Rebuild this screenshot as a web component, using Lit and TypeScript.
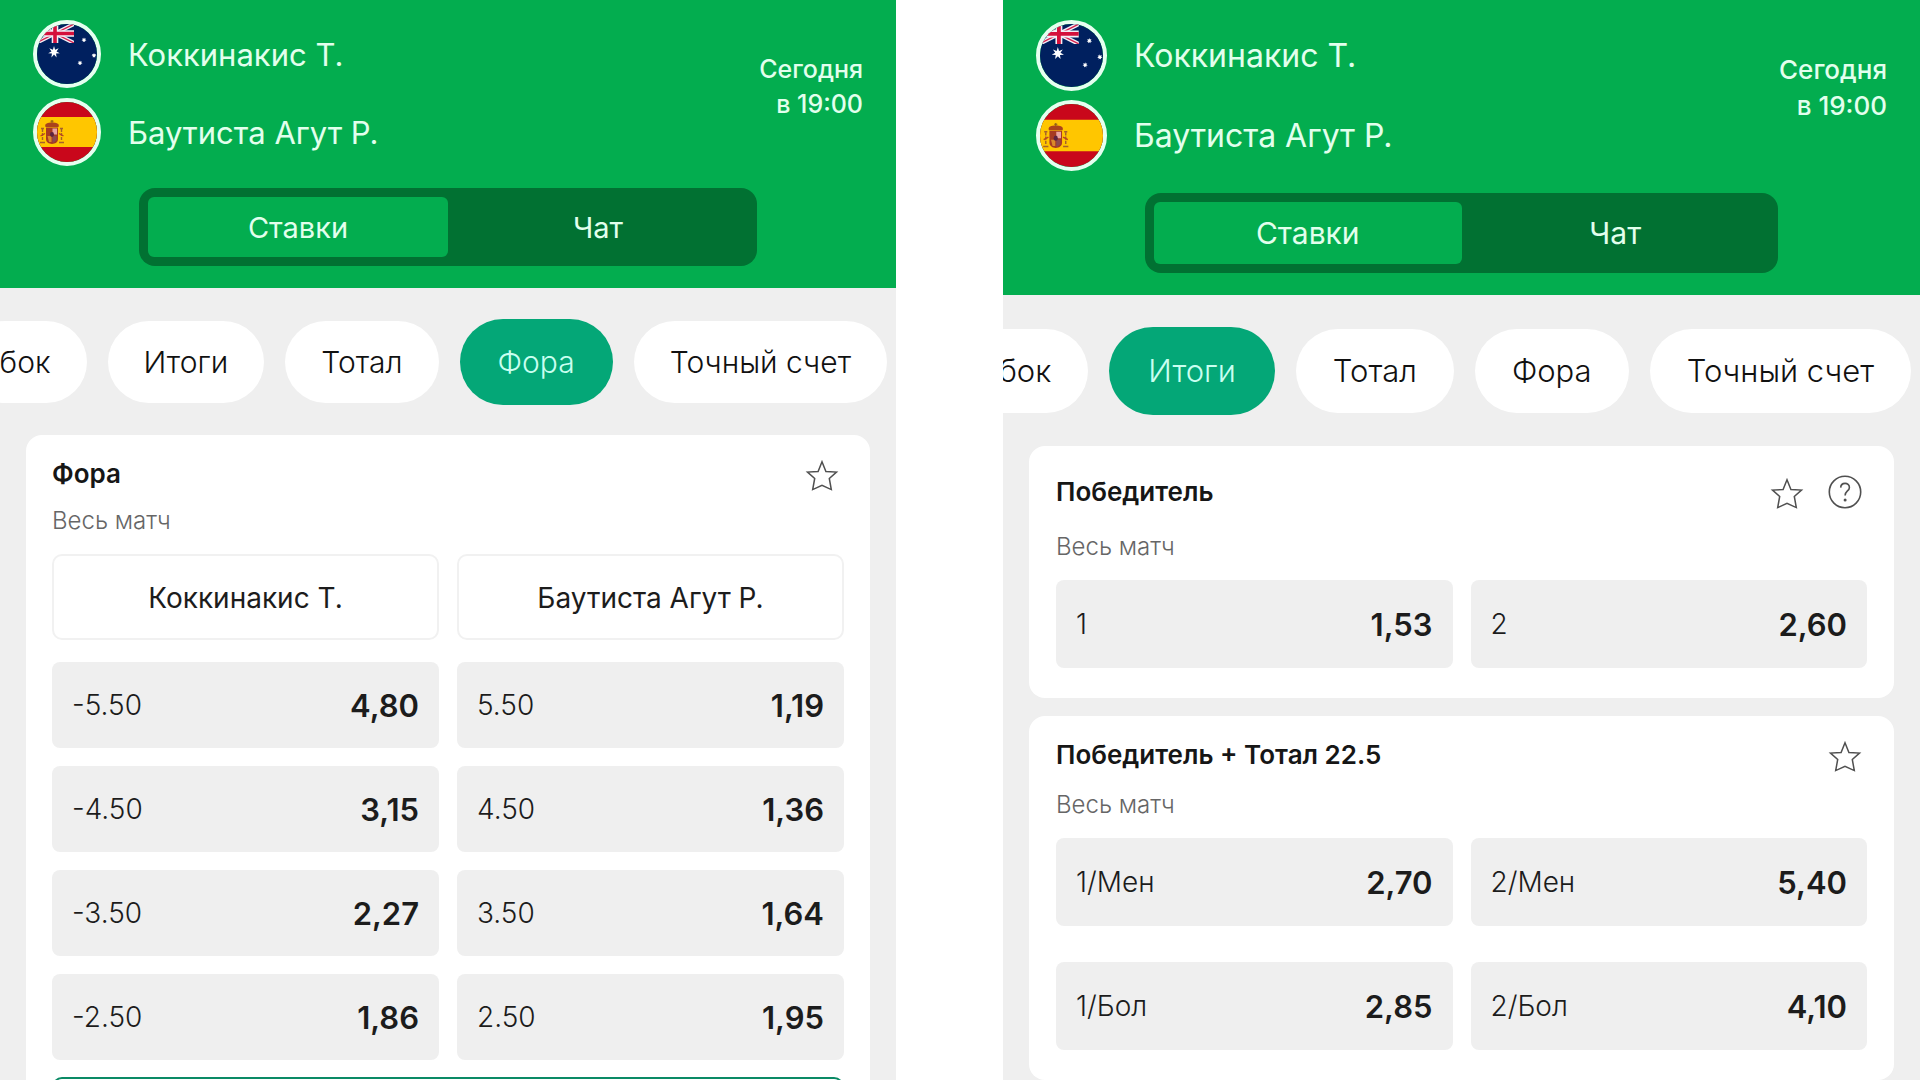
import { LitElement, html, svg, css, nothing } from "lit";
import { customElement, property } from "lit/decorators.js";
import { classMap } from "lit/directives/class-map.js";

interface Odd {
  label: string;
  price: string;
}

interface Market {
  title: string;
  scope: string;
  help?: boolean;
  roomy?: boolean;
  columns?: string[];
  odds: Odd[];
  more?: boolean;
}

const starPoints = (cx: number, cy: number, outer: number, inner: number, tips: number) =>
  Array.from({ length: tips * 2 }, (_, i) => {
    const r = i % 2 ? inner : outer;
    const a = (Math.PI * i) / tips - Math.PI / 2;
    return `${(cx + r * Math.cos(a)).toFixed(2)},${(cy + r * Math.sin(a)).toFixed(2)}`;
  }).join(" ");

const australia = html`
  <svg class="flag" viewBox="0 0 60 60" role="img" aria-label="Австралия">
    <rect width="60" height="60" fill="#00205f" />
    <svg x="-1" y="0" width="38" height="19" viewBox="0 0 38 19">
      <path d="M0 0L38 19M38 0L0 19" stroke="#f3eef6" stroke-width="4" />
      <path d="M0 0L38 19M38 0L0 19" stroke="#d5214c" stroke-width="1.3" />
      <path d="M19 0V19M0 9.5H38" stroke="#f3eef6" stroke-width="6.6" />
      <path d="M19 0V19M0 9.5H38" stroke="#d5103c" stroke-width="3.6" />
    </svg>
    ${svg`
      <polygon points=${starPoints(17, 28, 6, 2.6, 7)} fill="#fff" />
      <polygon points=${starPoints(47, 16, 2.6, 1.3, 7)} fill="#fff" />
      <polygon points=${starPoints(57, 31.5, 2.6, 1.3, 7)} fill="#fff" />
      <polygon points=${starPoints(43, 39, 2.6, 1.3, 7)} fill="#fff" />
    `}
  </svg>
`;

const spain = html`
  <svg class="flag" viewBox="0 0 60 60" role="img" aria-label="Испания">
    <rect width="60" height="60" fill="#c9071b" />
    <rect y="15" width="60" height="30" fill="#ffc600" />
    <g fill="none" stroke="#a5622b" stroke-width="1.4">
      <path d="M5.5 27V39M24.5 27V39" stroke-dasharray="3 1" />
      <path d="M3 40.5H8M22 40.5H27M4 26.5H7M23 26.5H26" />
      <path d="M3.5 34L8 31.5M26.5 34L22 31.5" stroke="#b8441f" />
    </g>
    <path d="M8.5 25C7 21.5 11 20.5 15 20.5C19 20.5 23 21.5 21.5 25Z" fill="#a9431c" />
    <path d="M15 18V21M13.5 19.2H16.5" stroke="#8a5a1c" stroke-width="1" />
    <path d="M9 25.5H21V37C21 43.5 9 43.5 9 37Z" fill="#a63a22" />
    <path d="M15.5 26.5H20V32.5H15.5Z" fill="#e8a3a0" />
    <path d="M10.5 34H14.5V40H12Z" fill="#d98a2a" />
    <path d="M15.5 34H19.5V38L17 40.5H15.5Z" fill="#8b4a4f" />
    <ellipse cx="15" cy="32.5" rx="2" ry="2.4" fill="#5b2340" />
  </svg>
`;

const star = html`
  <svg class="icon" viewBox="0 0 34 34" aria-hidden="true">
    <path
      d="M17 4.8L20.9 14.6L31.5 15.1L24.3 21.5L26.3 32.6L17 28.4L7.7 32.6L9.7 21.5L2.5 15.1L13.1 14.6Z"
      fill="none" stroke="#505050" stroke-width="1.5" stroke-linejoin="miter" />
  </svg>
`;

const help = html`
  <svg class="icon" viewBox="0 0 34 34" aria-hidden="true">
    <circle cx="17" cy="17" r="15.7" fill="none" stroke="#505050" stroke-width="1.6" />
    <path d="M12.7 12.6C12.9 7 21.4 7 21.4 12.4C21.4 16 17.1 16 17.1 20.5"
      fill="none" stroke="#505050" stroke-width="1.6" />
    <circle cx="17.1" cy="25" r="1.5" fill="#505050" />
  </svg>
`;

@customElement("market-card")
export class MarketCard extends LitElement {
  @property({ attribute: false }) market!: Market;

  static styles = css`
    :host {
      display: block;
    }
    .card {
      padding: 19px var(--card-pad) 30px;
      border-radius: 16px;
      background: #fff;
    }
    .card.roomy {
      padding-top: 26px;
    }
    .head {
      display: flex;
      align-items: center;
      justify-content: space-between;
      height: 39px;
      padding-right: 5px;
    }
    .title {
      margin: 0;
      color: #161616;
      font-size: 26px;
      font-weight: 600;
      line-height: 39px;
    }
    .actions {
      display: flex;
      gap: 24px;
    }
    .action {
      display: block;
      padding: 0;
      border: 0;
      background: none;
      cursor: pointer;
    }
    .icon {
      display: block;
      width: 34px;
      height: 34px;
    }
    .scope {
      margin: var(--scope-gap) 0 17px;
      color: #666;
      font-size: 24px;
      font-weight: 300;
      line-height: var(--scope-line);
    }
    .roomy .scope {
      margin-top: 19px;
    }
    .grid {
      display: grid;
      grid-template-columns: repeat(2, minmax(0, 1fr));
      column-gap: 18px;
      row-gap: var(--row-gap);
    }
    .columns {
      margin-bottom: 22px;
    }
    .column {
      box-sizing: border-box;
      height: var(--cell-height);
      border: 2px solid #f1f1f1;
      border-radius: 10px;
      color: #1c1c1c;
      font-size: 28px;
      line-height: 84px;
      text-align: center;
    }
    .odd {
      display: flex;
      align-items: center;
      justify-content: space-between;
      height: var(--cell-height);
      padding: 0 20px;
      border: 0;
      border-radius: 8px;
      background: #efefef;
      color: #1c1c1c;
      font-family: inherit;
      cursor: pointer;
    }
    .label {
      font-size: 28px;
      font-weight: 300;
    }
    .price {
      font-size: 31px;
      font-weight: 600;
    }
    .more {
      display: block;
      width: 100%;
      height: var(--cell-height);
      margin-top: 17px;
      border: 2px solid #0a8a65;
      border-radius: 10px;
      background: #fff;
      cursor: pointer;
    }
  `;

  render() {
    const m = this.market;
    return html`
      <section class=${classMap({ card: true, roomy: !!m.roomy })}>
        <div class="head">
          <h2 class="title">${m.title}</h2>
          <div class="actions">
            <button class="action" aria-label="В избранное">${star}</button>
            ${m.help ? html`<button class="action" aria-label="Справка">${help}</button>` : nothing}
          </div>
        </div>
        <p class="scope">${m.scope}</p>
        ${m.columns
          ? html`<div class="grid columns">
              ${m.columns.map((c) => html`<div class="column">${c}</div>`)}
            </div>`
          : nothing}
        <div class="grid">
          ${m.odds.map(
            (o) => html`<button class="odd">
              <span class="label">${o.label}</span><span class="price">${o.price}</span>
            </button>`
          )}
        </div>
        ${m.more ? html`<button class="more" aria-label="Ещё"></button>` : nothing}
      </section>
    `;
  }
}

@customElement("match-panel")
export class MatchPanel extends LitElement {
  @property() active = "";
  @property({ type: Boolean, reflect: true }) large = false;
  @property({ attribute: false }) markets: Market[] = [];

  static styles = css`
    :host {
      --flag: 68px;
      --flag-gap: 10px;
      --name-size: 31px;
      --time-size: 25px;
      --time-line: 35px;
      --inset: 139px;
      --toggle-height: 60px;
      --tab-size: 29px;
      --chip-size: 30px;
      --chip-height: 82px;
      --chip-pad: 36px;
      --chip-row: 147px;
      --card-pad: 26px;
      --scope-line: 32px;
      --scope-gap: 12px;
      --cell-height: 86px;
      --row-gap: 18px;
      display: block;
      overflow: hidden;
      background: #efefef;
    }
    :host([large]) {
      --flag: 71px;
      --flag-gap: 9px;
      --name-size: 32px;
      --time-size: 26px;
      --time-line: 36px;
      --inset: 142px;
      --toggle-height: 62px;
      --tab-size: 30px;
      --chip-size: 31px;
      --chip-height: 84px;
      --chip-pad: 37px;
      --chip-row: 151px;
      --card-pad: 27px;
      --scope-line: 33px;
      --scope-gap: 14px;
      --cell-height: 88px;
      --row-gap: 36px;
    }
    .header {
      padding: 20px 33px 22px;
      background: #03ad4f;
      color: #e2ffed;
    }
    .match {
      display: flex;
      justify-content: space-between;
    }
    .teams {
      display: grid;
      gap: var(--flag-gap);
      margin: 0;
      padding: 0;
      list-style: none;
    }
    .team {
      display: flex;
      align-items: center;
      gap: 27px;
      font-size: var(--name-size);
    }
    .flag {
      display: block;
      box-sizing: border-box;
      width: var(--flag);
      height: var(--flag);
      border: 4px solid #e6fff0;
      border-radius: 50%;
    }
    .time {
      margin: 32px 0 0;
      font-size: var(--time-size);
      font-weight: 500;
      line-height: var(--time-line);
      text-align: right;
    }
    .toggle {
      display: grid;
      grid-template-columns: 1fr 1fr;
      margin: 22px calc(var(--inset) - 33px) 0;
      padding: 9px;
      border-radius: 16px;
      background: #017132;
    }
    .tab {
      height: var(--toggle-height);
      padding: 0;
      border: 0;
      border-radius: 6px;
      background: none;
      color: inherit;
      font-family: inherit;
      font-size: var(--tab-size);
      cursor: pointer;
    }
    .tab.on {
      background: #03ad4f;
    }
    .chips {
      display: flex;
      align-items: center;
      justify-content: flex-end;
      gap: 21px;
      height: var(--chip-row);
      padding-right: 9px;
    }
    .chip {
      flex: none;
      height: var(--chip-height);
      padding: 0 var(--chip-pad);
      border: 0;
      border-radius: 44px;
      background: #fff;
      color: #111;
      font-family: inherit;
      font-size: var(--chip-size);
      font-weight: 300;
      cursor: pointer;
    }
    .chip.on {
      height: calc(var(--chip-height) + 4px);
      padding: 0 calc(var(--chip-pad) + 2px);
      background: #04a777;
      color: #c9fff0;
    }
    .markets {
      display: grid;
      gap: 18px;
      padding: 0 26px;
    }
  `;

  render() {
    const chips = ["бок", "Итоги", "Тотал", "Фора", "Точный счет"];
    return html`
      <header class="header">
        <div class="match">
          <ul class="teams">
            <li class="team">${australia}<span>Коккинакис Т.</span></li>
            <li class="team">${spain}<span>Баутиста Агут Р.</span></li>
          </ul>
          <p class="time">Сегодня<br />в 19:00</p>
        </div>
        <div class="toggle">
          <button class="tab on">Ставки</button>
          <button class="tab">Чат</button>
        </div>
      </header>
      <nav class="chips">
        ${chips.map(
          (c) => html`<button class=${classMap({ chip: true, on: c === this.active })}>${c}</button>`
        )}
      </nav>
      <div class="markets">
        ${this.markets.map((m) => html`<market-card .market=${m}></market-card>`)}
      </div>
    `;
  }
}

const pairs = (rows: string[][]): Odd[] =>
  rows.map(([label, price]) => ({ label, price }));

const handicap: Market[] = [
  {
    title: "Фора",
    scope: "Весь матч",
    columns: ["Коккинакис Т.", "Баутиста Агут Р."],
    odds: pairs([
      ["-5.50", "4,80"], ["5.50", "1,19"],
      ["-4.50", "3,15"], ["4.50", "1,36"],
      ["-3.50", "2,27"], ["3.50", "1,64"],
      ["-2.50", "1,86"], ["2.50", "1,95"],
    ]),
    more: true,
  },
];

const results: Market[] = [
  {
    title: "Победитель",
    scope: "Весь матч",
    help: true,
    roomy: true,
    odds: pairs([["1", "1,53"], ["2", "2,60"]]),
  },
  {
    title: "Победитель + Тотал 22.5",
    scope: "Весь матч",
    odds: pairs([
      ["1/Мен", "2,70"], ["2/Мен", "5,40"],
      ["1/Бол", "2,85"], ["2/Бол", "4,10"],
    ]),
  },
];

@customElement("app-root")
export class AppRoot extends LitElement {
  static styles = css`
    :host {
      display: grid;
      grid-template-columns: minmax(0, 896fr) minmax(0, 917fr);
      column-gap: 107px;
      height: 100vh;
      overflow: hidden;
      background: #fff;
      font-family: Inter, "Liberation Sans", sans-serif;
    }
  `;

  render() {
    return html`
      <match-panel active="Фора" .markets=${handicap}></match-panel>
      <match-panel large active="Итоги" .markets=${results}></match-panel>
    `;
  }
}
